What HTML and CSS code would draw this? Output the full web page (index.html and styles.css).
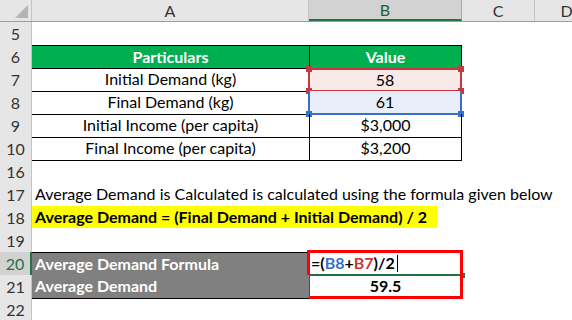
FILE: index.html
```html
<!DOCTYPE html>
<html lang="en">
<head>
  <meta charset="UTF-8">
  <title>Average Demand</title>
  <link rel="stylesheet" href="styles.css">
</head>
<body>
  <div class="sheet">
    <div class="row head">
      <div class="corner"><span class="tri"></span></div>
      <div class="col">A</div>
      <div class="col sel">B</div>
      <div class="col">C</div>
      <div class="col">D</div>
    </div>

    <div class="row"><div class="num">5</div></div>

    <div class="row">
      <div class="num">6</div>
      <div class="cell a title top">Particulars</div>
      <div class="cell b title top">Value</div>
    </div>
    <div class="row">
      <div class="num">7</div>
      <div class="cell a line">Initial Demand (kg)</div>
      <div class="cell b line ref red">58<i class="h tl"></i><i class="h tr"></i><i class="h bl"></i><i class="h br"></i></div>
    </div>
    <div class="row">
      <div class="num">8</div>
      <div class="cell a line">Final Demand (kg)</div>
      <div class="cell b line ref blue">61<i class="h bl"></i><i class="h br"></i></div>
    </div>
    <div class="row">
      <div class="num">9</div>
      <div class="cell a line">Initial Income (per capita)</div>
      <div class="cell b line">$3,000</div>
    </div>
    <div class="row">
      <div class="num">10</div>
      <div class="cell a line">Final Income (per capita)</div>
      <div class="cell b line">$3,200</div>
    </div>

    <div class="row"><div class="num">16</div></div>
    <div class="row">
      <div class="num">17</div>
      <div class="cell wide">Average Demand is Calculated is calculated using the formula given below</div>
    </div>
    <div class="row">
      <div class="num">18</div>
      <div class="cell wide"><span class="mark">Average Demand = (Final Demand + Initial Demand) / 2</span></div>
    </div>
    <div class="row"><div class="num">19</div></div>

    <div class="row">
      <div class="num cur">20</div>
      <div class="cell a grey top">Average Demand Formula</div>
      <div class="cell b active">=(<span class="r-blue">B8</span>+<span class="r-red">B7</span>)/2<span class="caret"></span><i class="fill"></i><span class="box"></span></div>
    </div>
    <div class="row">
      <div class="num">21</div>
      <div class="cell a grey line">Average Demand</div>
      <div class="cell b strong">59.5</div>
    </div>
    <div class="row"><div class="num">22</div></div>
  </div>
</body>
</html>
```

FILE: styles.css
```css
body {
  margin: 0;
  background: #fff;
  font-family: Lato, "Liberation Sans", sans-serif;
  font-size: 16px;
  color: #000;
}
.sheet {
  width: 572px;
  height: 320px;
  overflow: hidden;
}
.row {
  display: grid;
  grid-template-columns: 32px 277px 153px 73px 64px;
  height: 23px;
}
.head {
  height: 22px;
  background: #e6e6e6;
  border-bottom: 1px solid #9e9e9e;
  box-sizing: border-box;
}
.corner {
  position: relative;
  border-right: 1px solid #c4c4c4;
}
.tri {
  position: absolute;
  right: 3px;
  bottom: 3px;
  width: 0;
  height: 0;
  border-left: 13px solid transparent;
  border-bottom: 13px solid #b4b4b4;
}
.col {
  text-align: center;
  line-height: 21px;
  color: #333;
  border-right: 1px solid #c4c4c4;
}
.col.sel {
  background: #d2d2d2;
  color: #1e5e3a;
  border-bottom: 2px solid #217346;
  border-right-color: #a8a8a8;
  height: 21px;
  box-sizing: border-box;
  line-height: 20px;
}
.num {
  background: #e6e6e6;
  border-right: 1px solid #c4c4c4;
  border-bottom: 1px solid #d4d4d4;
  text-align: center;
  line-height: 23px;
  color: #333;
}
.num.cur {
  background: #d2d2d2;
  color: #217346;
  border-right: 2px solid #217346;
}
.cell {
  box-sizing: border-box;
  line-height: 22px;
  white-space: nowrap;
  position: relative;
}
.a, .b { text-align: center; }
.b {
  border-left: 1px solid #000;
  border-right: 1px solid #000;
}
.line { border-bottom: 1px solid #000; }
.top {
  border-top: 1px solid #000;
  border-bottom: 1px solid #000;
  line-height: 21px;
}
.title {
  background: #00b050;
  color: #fff;
  font-weight: bold;
}
.ref { line-height: 20px; }
.ref.red {
  background: #f8e9e9;
  border: 2px solid #c6383e;
  margin-left: -1px;
}
.ref.blue {
  background: #e8eef8;
  border: 2px solid #3a6fc6;
  border-top: 0;
  margin-left: -1px;
  line-height: 21px;
}
.h {
  position: absolute;
  width: 6px;
  height: 6px;
  background: #c6383e;
}
.blue .h { background: #3a6fc6; }
.tl { left: -4px; top: -4px; }
.tr { right: -4px; top: -4px; }
.bl { left: -4px; bottom: -4px; }
.br { right: -4px; bottom: -4px; }
.wide {
  grid-column: 2 / 6;
  padding-left: 3px;
}
.mark {
  display: block;
  width: 405px;
  background: #ffff00;
  font-weight: bold;
  margin-left: -3px;
  padding-left: 3px;
  box-sizing: border-box;
}
.grey {
  background: #808080;
  color: #fff;
  font-weight: bold;
  text-align: left;
  padding-left: 3px;
}
.active {
  text-align: left;
  font-weight: bold;
  padding-left: 2px;
  border: 0;
  border-bottom: 2px solid #217346;
  line-height: 21px;
}
.r-blue { color: #3a6fc6; }
.r-red { color: #c6383e; }
.caret {
  display: inline-block;
  width: 1px;
  height: 17px;
  background: #000;
  vertical-align: -3px;
  margin-left: 2px;
}
.fill {
  position: absolute;
  right: -3px;
  bottom: -4px;
  width: 5px;
  height: 5px;
  background: #217346;
}
.strong {
  font-weight: bold;
  border: 0;
}
.box {
  position: absolute;
  left: -2px;
  top: -2px;
  width: 156px;
  height: 49px;
  border: 3px solid #ff0000;
  box-sizing: border-box;
}
```
